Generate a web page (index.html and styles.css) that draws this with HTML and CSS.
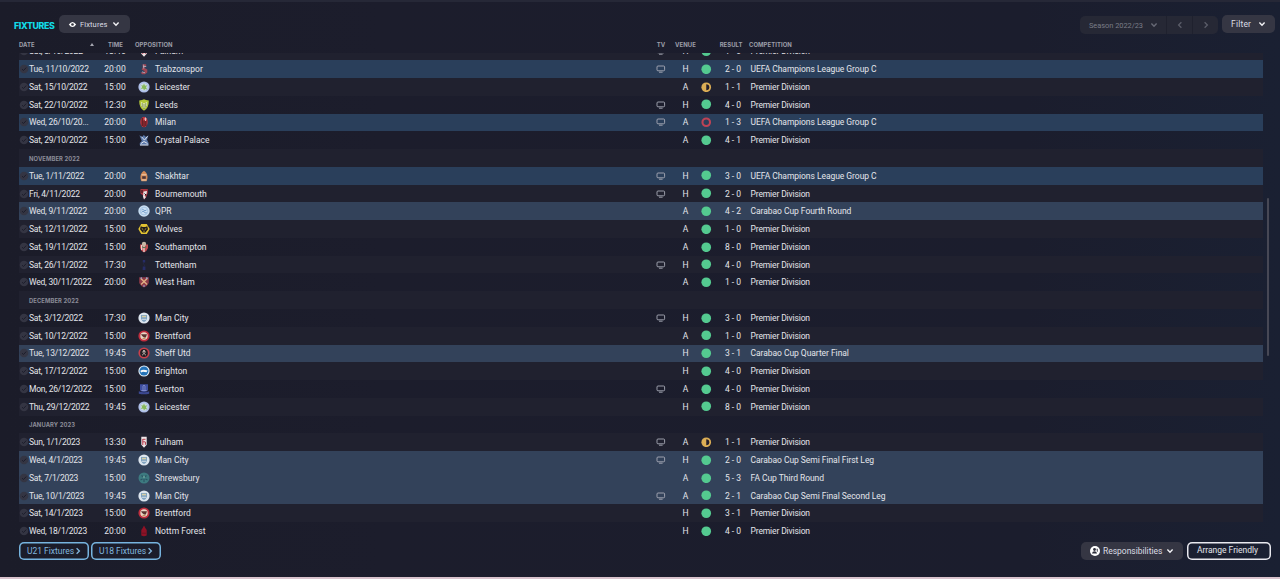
FILE: index.html
```html
<!DOCTYPE html>
<html>
	<head>
		<meta charset="utf-8">
		<title>Fixtures</title>
		<link rel="stylesheet" href="styles.css">
	</head>
	<body>
		<svg class="defs">
			<symbol id="check" viewBox="0 0 10 10"><circle cx="5" cy="5" r="4.3" fill="#343543"/><path d="M3 5.2l1.5 1.3L7.2 3.6" fill="none" stroke="#1c1d2b" stroke-width="1"/></symbol>
			<symbol id="tv" viewBox="0 0 10 8"><rect x="1" y="1" width="7.6" height="4.8" rx="1" fill="none" stroke="#a9acb8" stroke-width=".9"/><path d="M3 7.2h3.6" stroke="#a9acb8" stroke-width=".9"/></symbol>
			<symbol id="win" viewBox="0 0 10 10"><circle cx="5" cy="5" r="4.6" fill="#54ca90"/></symbol>
			<symbol id="draw" viewBox="0 0 10 10"><circle cx="5" cy="5" r="4.6" fill="#dcae55"/><path d="M5 2.1a2.9 2.9 0 0 1 0 5.8z" fill="#241f2b"/></symbol>
			<symbol id="loss" viewBox="0 0 10 10"><circle cx="5" cy="5" r="3.6" fill="none" stroke="#bd4355" stroke-width="2"/></symbol>
			<symbol id="down" viewBox="0 0 8 6"><path d="M1.4 1.6L4 4.2l2.6-2.6" fill="none" stroke="currentColor" stroke-width="1.4"/></symbol>
			<symbol id="right" viewBox="0 0 6 8"><path d="M1.6 1.2L4.4 4 1.6 6.8" fill="none" stroke="currentColor" stroke-width="1.3"/></symbol>
			<symbol id="left" viewBox="0 0 6 8"><path d="M4.4 1.2L1.6 4l2.8 2.8" fill="none" stroke="currentColor" stroke-width="1.3"/></symbol>

			<!-- club badges -->
			<symbol id="trabzonspor" viewBox="0 0 12 12"><path d="M4.500 1.200h3.700v2.600H6.600v1.200L9.300 6.500v3L7 11.300H4L2.600 9.300h3.800V8L3.600 6.600 4.700 4.400z" fill="#9d4654"/><path d="M5.200 3.500h3M4 8.800l3 1M5.700 1.600v4" stroke="#b4bac9" stroke-width=".8"/></symbol>
			<symbol id="leicester" viewBox="0 0 12 12"><circle cx="6" cy="6" r="5.600" fill="#aebfe8"/><circle cx="6" cy="6" r="3.700" fill="#c8d8df"/><path d="M6 2.500l1 2.300 2.300-.5-1.400 2 1.400 2.200-2.200-.6L6 9.600l-.8-2-2.400.3 1.400-1.900-1-1.800 1.900.4z" fill="#86b85b"/></symbol>
			<symbol id="leeds" viewBox="0 0 12 12"><path d="M1.200 1.500L4 1l2-.7L8 1l2.800.5Q11 9 6 11.800 1 9 1.200 1.500z" fill="#b3c83a"/><path d="M3 3l3 1.400L9 3v3.700L6 9.600 3 6.700z" fill="#e3ebbe"/><path d="M4.200 4v4M7.800 4v4M6 5v5" stroke="#6f8437" stroke-width=".8"/></symbol>
			<symbol id="milan" viewBox="0 0 12 12"><ellipse cx="6" cy="6" rx="3.700" ry="5.300" fill="#c4353d"/><path d="M4.200 2v8M6 4.500v6.500M7.900 5v5" stroke="#1c1015" stroke-width=".8"/><path d="M6.300 3h2.300M7.500 1.500v3.500" stroke="#e3c9cc" stroke-width=".9"/></symbol>
			<symbol id="palace" viewBox="0 0 12 12"><path d="M1.400 1.200L4 3l1.800-2L8 3l2.500-1.800L9 5.800 10.600 9v2.300H1.800V9l2-2z" fill="#5a78aa"/><path d="M3.500 2.700l3 3.400 3-3.800M3 9.500l3-2 3.500 2M2 11h8.300" stroke="#dce1eb" stroke-width="1" fill="none"/></symbol>
			<symbol id="shakhtar" viewBox="0 0 12 12"><path d="M6 .7c4 2.600 4.200 7 2.500 10.500h-5C1.700 7.700 2 3.300 6 .7z" fill="#d48b57"/><path d="M3.600 4.800h4.800M3.500 10h5" stroke="#efd5bd" stroke-width=".9"/><path d="M4.200 6.200h3.600v2.600H4.200z" fill="#4a3437"/></symbol>
			<symbol id="bournemouth" viewBox="0 0 12 12"><path d="M2.500 1h7.300v4L8 9.500 6 11.500l-1-4-2.500-2z" fill="#a9343f"/><path d="M5.500 3.500L9 3l-.5 3-2 1.500L8 9l-2 2.500-1-3z" fill="#e9e3e6"/><path d="M4 2v3M6.500 5.500L8 7" stroke="#201519"/></symbol>
			<symbol id="qpr" viewBox="0 0 12 12"><circle cx="6" cy="6" r="5.700" fill="#c9dff3"/><circle cx="6" cy="6" r="3.900" fill="none" stroke="#8eb4dc" stroke-width=".6"/><path d="M3.500 5q1.300-1.500 2.300 0T8.500 5M3.500 7.300q1.500-2 2.500-.5t2.700 1" fill="none" stroke="#618fc4" stroke-width=".8"/></symbol>
			<symbol id="wolves" viewBox="0 0 12 12"><path d="M3.200.9h5.600L11.700 6l-2.900 5.100H3.200L.3 6z" fill="#e2c332"/><path d="M2.700 3.200l2 .9h2.600l2-.9.700 3L7.400 9.400H4.600L2 6.200z" fill="#211d1d"/><path d="M3.800 5.700l1.400.7M8.200 5.700l-1.400.7M6 7.500v1.500" stroke="#e2c332" stroke-width=".8"/></symbol>
			<symbol id="southampton" viewBox="0 0 12 12"><path d="M2 3.500h8v3.500Q9 10 6 11.500 3 10 2 7z" fill="#c44b50"/><path d="M6 4v7M3.700 4v5" stroke="#ead9d5" stroke-width="1.300"/><circle cx="6" cy="3" r="2.200" fill="#c7b7a5"/><path d="M4 5.800l2 1 2.300-1" stroke="#4b7954" stroke-width="1" fill="none"/></symbol>
			<symbol id="tottenham" viewBox="0 0 12 12"><path d="M4.800 1h2.400v2.500H4.800zM4.800 7.500h2.600v3.500H4.600z" fill="#262c66"/><path d="M5.200 4l1.600 3" stroke="#232747" stroke-width=".8"/></symbol>
			<symbol id="westham" viewBox="0 0 12 12"><path d="M1.200 1.200h9.600V7Q9.500 10 6 11.600 2.500 10 1.200 7z" fill="#8c3a48"/><path d="M2.800 2.500l6.300 6M9.200 2.500L3 8.500" stroke="#e0b184" stroke-width="1.300"/><path d="M2.500 2.300l1.500-.5M8 1.800l1.700.6M5 10h2" stroke="#91aee0" stroke-width="1.200"/></symbol>
			<symbol id="mancity" viewBox="0 0 12 12"><circle cx="6" cy="6" r="5.600" fill="#dce5ee"/><path d="M3 3h6v3.500Q8.500 9 6 10 3.500 9 3 6.500z" fill="#7fa3bf"/><path d="M4 3.800h4v1.500H4z" fill="#d8cfa5"/><path d="M4 7.300h4" stroke="#e4ebf1" stroke-width=".8"/></symbol>
			<symbol id="brentford" viewBox="0 0 12 12"><circle cx="6" cy="6" r="5.600" fill="#c02e3e"/><circle cx="6" cy="6" r="3.700" fill="#e8d6c5"/><path d="M3 4.300h6L7.800 7.500H6L4.200 6z" fill="#5b3430"/><path d="M4.500 8.500h3" stroke="#c09157"/></symbol>
			<symbol id="sheffutd" viewBox="0 0 12 12"><circle cx="6" cy="6" r="5.600" fill="#c9404b"/><circle cx="6" cy="6" r="3.900" fill="#241e24"/><path d="M4 4.500l4 3.800M8 4.500L4 8.300" stroke="#d7c4bd" stroke-width=".8"/><circle cx="6" cy="4" r=".9" fill="#f2e9e3"/></symbol>
			<symbol id="brighton" viewBox="0 0 12 12"><circle cx="6" cy="6" r="5.600" fill="#e5f0f8"/><circle cx="6" cy="6" r="4.500" fill="#2272b8"/><path d="M2.300 5.800Q5 4 9.600 5.600L8.500 7.300 5 6.800 3 7.600z" fill="#f5f8fb"/></symbol>
			<symbol id="everton" viewBox="0 0 12 12"><path d="M2 1.200h8v6Q9 8.800 6 9 3 8.800 2 7.200z" fill="#3f4fa3"/><path d="M5 8V3l1-1 1 1v5M3.300 7.500h5.400" stroke="#8994d0" stroke-width=".8" fill="none"/><path d="M.8 8.200Q6 10.500 11.200 8.200v2.500Q6 12 .8 10.700z" fill="#3b4891"/></symbol>
			<symbol id="fulham" viewBox="0 0 12 12"><path d="M3.300.7h5.400v8L6 11.700 3.300 8.700z" fill="#eee5e7"/><path d="M4.800 3.300h2.700M4.800 3v6M4.800 5.800H7M7.400 5.800v3" stroke="#b83d4c" stroke-width="1"/></symbol>
			<symbol id="shrewsbury" viewBox="0 0 12 12"><circle cx="6" cy="6" r="5.500" fill="#3d7a80"/><path d="M3.500 3.500l2 1.500M8.500 3.500l-2 1.500M6 7v3M2.500 8l2-1M9.500 8l-2-1" stroke="#2b5564" stroke-width="1.200"/><circle cx="6" cy="5" r="1" fill="#6da49d"/></symbol>
			<symbol id="forest" viewBox="0 0 12 12"><path d="M6 .5l1.500 2.700L8.700 5v5.500q-2.700 1.500-5.400 0V5l1.200-1.800z" fill="#8f1226"/><path d="M4 8.200h4" stroke="#6a1424" stroke-width="1"/></symbol>
		</svg>

		<div class="screen">
			<div class="toolbar">
				<h1>FIXTURES</h1>
				<div class="btn view">
					<svg class="eye" viewBox="0 0 10 8"><path d="M.8 4Q5-1.800 9.200 4 5 9.800.8 4z" fill="#fff"/><circle cx="5" cy="4" r="1.500" fill="#34353f"/></svg>
					<span>Fixtures</span>
					<svg class="down"><use href="#down"/></svg>
				</div>
				<div class="season">
					<div class="pick">Season 2022/23<svg class="down"><use href="#down"/></svg></div>
					<div class="step"><svg class="arrow"><use href="#left"/></svg></div>
					<div class="step"><svg class="arrow"><use href="#right"/></svg></div>
				</div>
				<div class="btn filter"><span>Filter</span><svg class="down"><use href="#down"/></svg></div>
			</div>

			<div class="row head">
				<div class="sort">DATE<i></i></div>
				<div class="time">TIME</div>
				<div class="opp">OPPOSITION</div>
				<div class="tv">TV</div>
				<div class="venue">VENUE</div>
				<div class="result">RESULT</div>
				<div class="comp">COMPETITION</div>
			</div>

			<div class="body">
				<div class="list"><div id="rows"></div></div>
				<div class="scroll"></div>
			</div>

			<div class="footer">
				<div class="link">U21 Fixtures<svg class="arrow"><use href="#right"/></svg></div>
				<div class="link">U18 Fixtures<svg class="arrow"><use href="#right"/></svg></div>
				<div class="btn resp">
					<svg class="person" viewBox="0 0 10 10"><circle cx="5" cy="5" r="5" fill="#fff"/><circle cx="4.500" cy="3.500" r="1.400" fill="#2b2c38"/><path d="M2 7.600q.3-2.400 2.500-2.400T7 7.600zM6.500 2.800h1.200v3H7z" fill="#2b2c38"/></svg>
					<span>Responsibilities</span>
					<svg class="down"><use href="#down"/></svg>
				</div>
				<div class="arrange">Arrange Friendly</div>
			</div>
		</div>
		<script src="script.js"></script>
	</body>
</html>
```
FILE: styles.css
```css
*{
	margin: 0;
	padding: 0;
	box-sizing: border-box;
}

body{
	height: 579px;
	overflow: hidden;
	background: #1b1d2c;
	color: #e4e5ea;
	font-family: Roboto, "Liberation Sans", sans-serif;
	font-size: 8.5px;
	letter-spacing: -0.02px;
}

svg{
	display: block;
	flex: none;
}
.defs{
	position: absolute;
	width: 0;
	height: 0;
}

.screen{
	height: 579px;
	display: flex;
	flex-direction: column;
	border-top: 2px solid #262837;
	border-bottom: 2px solid #d9c3cd;
	background: linear-gradient(to right, #1b1c29, #1c1d2c 30%, #1b1d2d 80%, #1a2032);
}

/* top bar */
.toolbar{
	height: 36px;
	flex: none;
	display: flex;
	align-items: flex-start;
	padding: 12px 5px 0 14px;
}
h1{
	width: 45px;
	padding-top: 6px;
	font-family: Inter, sans-serif;
	font-size: 8.8px;
	line-height: 12px;
	letter-spacing: -0.35px;
	font-weight: 800;
	color: #12dbe6;
}
.btn{
	display: flex;
	align-items: center;
	height: 18px;
	border-radius: 5px;
	background: #353643;
	color: #dcdde3;
}
.down{
	width: 8px;
	height: 6px;
	color: #f3f3f6;
}
.arrow{
	width: 6px;
	height: 8px;
}
.view{
	width: 71px;
	margin-top: 1px;
	padding-left: 9px;
	font-size: 7.5px;
	letter-spacing: 0.12px;
}
.eye{
	width: 9px;
	height: 7px;
	margin-right: 3px;
}
.view .down{
	margin-left: 4px;
}
.season{
	display: flex;
	margin: 2px 4px 0 auto;
	height: 18px;
	border-radius: 5px;
	background: #262835;
	color: #7a7c87;
	font-size: 7.4px;
}
.season .down{
	color: #686a76;
	margin-left: auto;
}
.pick{
	display: flex;
	align-items: center;
	width: 86px;
	padding: 0 8px 0 9px;
}
.step{
	display: flex;
	align-items: center;
	justify-content: center;
	width: 26px;
	border-left: 1px solid #1f212e;
	color: #5b5d69;
}
.filter{
	width: 53px;
	margin-top: 1px;
	padding: 0 9px 1px 9px;
	justify-content: space-between;
	letter-spacing: 0.2px;
}

/* table */
.row{
	display: grid;
	grid-template-columns: 10px 67px 38px 21px 495px 22px 27px 14px 28px 9.5px 1fr;
	align-items: center;
	width: 1244px;
	height: 17.77px;
}
.time,.tv,.venue{
	text-align: center;
	justify-self: center;
}
.result{
	text-align: right;
}
.head{
	flex: none;
	height: 14.5px;
	margin-left: 19px;
	padding-bottom: 2.5px;
	grid-template-columns: 77px 39px 515px 22px 27px 43.5px 1fr;
	font-family: Inter, sans-serif;
	font-size: 5.9px;
	font-weight: 700;
	letter-spacing: 0.08px;
	color: #9c9da8;
}
.sort{
	display: flex;
	justify-content: space-between;
	align-items: center;
	padding-right: 2px;
}
.sort i{
	border: 2px solid transparent;
	border-top: 0;
	border-bottom: 3px solid #a5a6b0;
}
.head .result,.head .comp{
	white-space: nowrap;
}
.head .comp{
	padding-left: 6.5px;
}

.body{
	flex: none;
	height: 487.5px;
	display: flex;
}
/* the list is scrolled part of the way through its first row */
.list{
	width: 1244px;
	margin-left: 19px;
	overflow: hidden;
}
#rows{
	margin-top: -10px;
}
#rows .row:nth-child(odd){
	background: #20212f;
}
#rows .row.cl{
	background: #2a3f5b;
}
#rows .row.cup{
	background: #33425a;
}
#rows .row.month{
	display: flex;
	padding: 1px 0 0 10px;
	font-family: Inter, sans-serif;
	font-size: 5.8px;
	font-weight: 700;
	letter-spacing: 0.12px;
	color: #8b8c98;
}
.date,.name,.comp{
	white-space: nowrap;
}
.date{
	letter-spacing: -0.21px;
}
#rows .time{
	letter-spacing: 0.08px;
}
#rows .comp{
	letter-spacing: -0.05px;
}
.name{
	letter-spacing: 0.04px;
}
/* the most common competition runs a little tighter */
#rows .league{
	letter-spacing: -0.13px;
}
.check{
	width: 10px;
	height: 10px;
}
.badge{
	width: 12px;
	height: 12px;
	margin-left: 4px;
}
.icon-tv{
	width: 10px;
	height: 8px;
}
.status{
	width: 10.5px;
	height: 10.5px;
	margin-left: 2px;
}
.scroll{
	width: 2px;
	height: 158px;
	margin: 145px 0 0 3.5px;
	border-radius: 1px;
	background: #474855;
}

/* bottom bar */
.footer{
	display: flex;
	padding: 2px 9px 0 19px;
}
.link{
	display: flex;
	align-items: center;
	justify-content: center;
	width: 70px;
	height: 18px;
	margin-right: 2px;
	border-radius: 5px;
	box-shadow: inset 0 0 0 1.5px #77b4df;
	color: #82b7df;
}
.link .arrow{
	margin-left: 1px;
}
.resp{
	width: 102px;
	margin: 0 4px 0 auto;
	padding: 0 9px;
}
.person{
	width: 10px;
	height: 10px;
	margin-right: 3px;
}
.resp .down{
	margin-left: auto;
}
.arrange{
	width: 84px;
	height: 18px;
	padding-right: 3px;
	border-radius: 5px;
	box-shadow: inset 0 0 0 1.5px #e9e9ef;
	line-height: 17px;
	text-align: center;
}
```
FILE: script.js
```js
// date, time, badge, opposition, tv, venue, status, result, competition
var CL = 'UEFA Champions League Group C';
var PL = 'Premier Division';
var fixtures = [
	['Sat, 8/10/2022', '18:45', 'fulham', 'Fulham', 1, 'H', 'win', '1 - 0', PL],
	['Tue, 11/10/2022', '20:00', 'trabzonspor', 'Trabzonspor', 1, 'H', 'win', '2 - 0', CL],
	['Sat, 15/10/2022', '15:00', 'leicester', 'Leicester', 0, 'A', 'draw', '1 - 1', PL],
	['Sat, 22/10/2022', '12:30', 'leeds', 'Leeds', 1, 'H', 'win', '4 - 0', PL],
	['Wed, 26/10/20...', '20:00', 'milan', 'Milan', 1, 'A', 'loss', '1 - 3', CL],
	['Sat, 29/10/2022', '15:00', 'palace', 'Crystal Palace', 0, 'A', 'win', '4 - 1', PL],
	'NOVEMBER 2022',
	['Tue, 1/11/2022', '20:00', 'shakhtar', 'Shakhtar', 1, 'H', 'win', '3 - 0', CL],
	['Fri, 4/11/2022', '20:00', 'bournemouth', 'Bournemouth', 1, 'H', 'win', '2 - 0', PL],
	['Wed, 9/11/2022', '20:00', 'qpr', 'QPR', 0, 'A', 'win', '4 - 2', 'Carabao Cup Fourth Round'],
	['Sat, 12/11/2022', '15:00', 'wolves', 'Wolves', 0, 'A', 'win', '1 - 0', PL],
	['Sat, 19/11/2022', '15:00', 'southampton', 'Southampton', 0, 'A', 'win', '8 - 0', PL],
	['Sat, 26/11/2022', '17:30', 'tottenham', 'Tottenham', 1, 'H', 'win', '4 - 0', PL],
	['Wed, 30/11/2022', '20:00', 'westham', 'West Ham', 0, 'A', 'win', '1 - 0', PL],
	'DECEMBER 2022',
	['Sat, 3/12/2022', '17:30', 'mancity', 'Man City', 1, 'H', 'win', '3 - 0', PL],
	['Sat, 10/12/2022', '15:00', 'brentford', 'Brentford', 0, 'A', 'win', '1 - 0', PL],
	['Tue, 13/12/2022', '19:45', 'sheffutd', 'Sheff Utd', 0, 'H', 'win', '3 - 1', 'Carabao Cup Quarter Final'],
	['Sat, 17/12/2022', '15:00', 'brighton', 'Brighton', 0, 'H', 'win', '4 - 0', PL],
	['Mon, 26/12/2022', '15:00', 'everton', 'Everton', 1, 'A', 'win', '4 - 0', PL],
	['Thu, 29/12/2022', '19:45', 'leicester', 'Leicester', 0, 'H', 'win', '8 - 0', PL],
	'JANUARY 2023',
	['Sun, 1/1/2023', '13:30', 'fulham', 'Fulham', 1, 'A', 'draw', '1 - 1', PL],
	['Wed, 4/1/2023', '19:45', 'mancity', 'Man City', 1, 'H', 'win', '2 - 0', 'Carabao Cup Semi Final First Leg'],
	['Sat, 7/1/2023', '15:00', 'shrewsbury', 'Shrewsbury', 0, 'A', 'win', '5 - 3', 'FA Cup Third Round'],
	['Tue, 10/1/2023', '19:45', 'mancity', 'Man City', 1, 'A', 'win', '2 - 1', 'Carabao Cup Semi Final Second Leg'],
	['Sat, 14/1/2023', '15:00', 'brentford', 'Brentford', 0, 'H', 'win', '3 - 1', PL],
	['Wed, 18/1/2023', '20:00', 'forest', 'Nottm Forest', 0, 'H', 'win', '4 - 0', PL]
];

function icon(cls, id){
	return '<svg class="' + cls + '"><use href="#' + id + '"/></svg>';
}

var html = '';
for(var i = 0; i < fixtures.length; i++){
	var f = fixtures[i];
	if(typeof f == 'string'){
		html += '<div class="row month">' + f + '</div>';
		continue;
	}
	var type = f[8] == PL ? '' : f[8] == CL ? ' cl' : ' cup';
	html += '<div class="row' + type + '">' +
		icon('check', 'check') +
		'<div class="date">' + f[0] + '</div>' +
		'<div class="time">' + f[1] + '</div>' +
		icon('badge', f[2]) +
		'<div class="name">' + f[3] + '</div>' +
		'<div class="tv">' + (f[4] ? icon('icon-tv', 'tv') : '') + '</div>' +
		'<div class="venue">' + f[5] + '</div>' +
		icon('status', f[6]) +
		'<div class="result">' + f[7] + '</div><div></div>' +
		'<div class="comp' + (type ? '' : ' league') + '">' + f[8] + '</div>' +
		'</div>';
}
document.getElementById('rows').innerHTML = html;
```
